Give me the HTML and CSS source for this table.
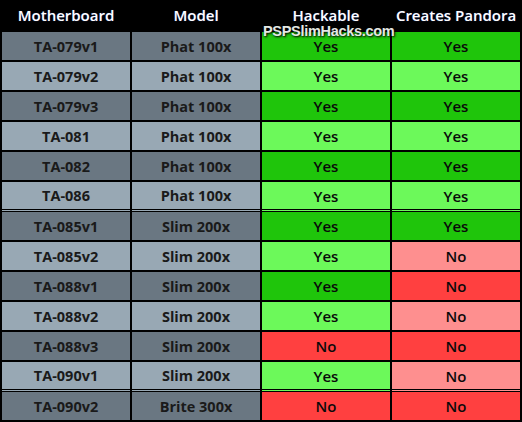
FILE: index.html
```html
<!DOCTYPE html>
<html>
<head>
<meta charset="utf-8">
<link rel="stylesheet" href="styles.css">
</head>
<body>
<div class="chart">
  <div class="head">
    <div class="hcell">Motherboard</div>
    <div class="hcell">Model</div>
    <div class="hcell">Hackable</div>
    <div class="hcell">Creates Pandora</div>
  </div>
  <div class="grid">
    <div class="c gd">TA-079v1</div><div class="c gd">Phat 100x</div><div class="c yd">Yes</div><div class="c yd">Yes</div>
    <div class="c gl">TA-079v2</div><div class="c gl">Phat 100x</div><div class="c yl">Yes</div><div class="c yl">Yes</div>
    <div class="c gd">TA-079v3</div><div class="c gd">Phat 100x</div><div class="c yd">Yes</div><div class="c yd">Yes</div>
    <div class="c gl">TA-081</div><div class="c gl">Phat 100x</div><div class="c yl">Yes</div><div class="c yl">Yes</div>
    <div class="c gd">TA-082</div><div class="c gd">Phat 100x</div><div class="c yd">Yes</div><div class="c yd">Yes</div>
    <div class="c gl sep">TA-086</div><div class="c gl sep">Phat 100x</div><div class="c yl sep">Yes</div><div class="c yl sep">Yes</div>
    <div class="c gd">TA-085v1</div><div class="c gd">Slim 200x</div><div class="c yd">Yes</div><div class="c yd">Yes</div>
    <div class="c gl">TA-085v2</div><div class="c gl">Slim 200x</div><div class="c yl">Yes</div><div class="c nl">No</div>
    <div class="c gd">TA-088v1</div><div class="c gd">Slim 200x</div><div class="c yd">Yes</div><div class="c nd">No</div>
    <div class="c gl">TA-088v2</div><div class="c gl">Slim 200x</div><div class="c yl">Yes</div><div class="c nl">No</div>
    <div class="c gd">TA-088v3</div><div class="c gd">Slim 200x</div><div class="c nd">No</div><div class="c nd">No</div>
    <div class="c gl sep">TA-090v1</div><div class="c gl sep">Slim 200x</div><div class="c yl sep">Yes</div><div class="c nl sep">No</div>
    <div class="c gd">TA-090v2</div><div class="c gd">Brite 300x</div><div class="c nd">No</div><div class="c nd">No</div>
  </div>
  <div class="mark">PSPSlimHacks.com</div>
</div>
</body>
</html>
```
FILE: styles.css
```css
html, body {
  margin: 0;
  padding: 0;
  background: #000;
}
.chart {
  position: relative;
  width: 522px;
  height: 422px;
  background: #000;
  overflow: hidden;
}
.head {
  display: grid;
  grid-template-columns: repeat(4, 128px);
  column-gap: 2px;
  padding: 0 2px;
  height: 32px;
}
.hcell {
  display: flex;
  align-items: center;
  justify-content: center;
  color: #fff;
  font-family: "Open Sans", sans-serif;
  font-weight: 600;
  font-size: 15px;
  padding-bottom: 2px;
  text-shadow: 0 0 1px #2a3f8f;
}
.grid {
  display: grid;
  grid-template-columns: repeat(4, 128px);
  grid-auto-rows: 28px;
  gap: 2px;
  padding: 0 2px 2px;
}
.c {
  --bg: #6a7782;
  background: var(--bg);
  display: flex;
  align-items: center;
  justify-content: center;
  font-family: "Open Sans", sans-serif;
  font-size: 15px;
  color: #141414;
  box-sizing: border-box;
}
.gd, .gl {
  font-weight: 700;
  font-size: 14.5px;
  color: #1a1a1a;
}
.yd, .yl, .nd, .nl {
  font-weight: 600;
  color: #0a0a0a;
}
.gd { --bg: #6a7782; }
.gl { --bg: #98a8b4; }
.yd { --bg: #1fc50b; }
.yl { --bg: #6cf95a; }
.nd { --bg: #ff4040; }
.nl { --bg: #fe8f8f; }
.sep {
  border-bottom: 1px solid #000;
  box-shadow: 0 1px 0 0 var(--bg);
}
.mark {
  position: absolute;
  left: 263px;
  top: 23px;
  font-family: "Liberation Sans", sans-serif;
  font-weight: 700;
  font-size: 14.5px;
  letter-spacing: -0.3px;
  color: #e4e8e4;
  text-shadow: 1px 1px 2px rgba(0,0,0,0.9), 0 0 3px rgba(0,0,0,0.6);
}
```
